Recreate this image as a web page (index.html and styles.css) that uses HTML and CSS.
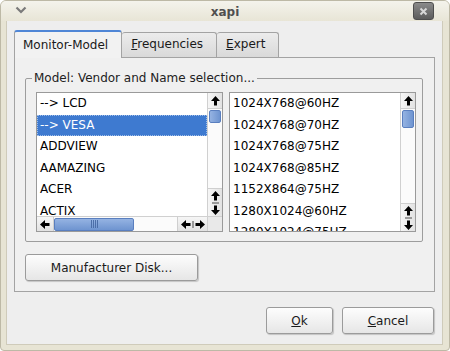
FILE: index.html
```html
<!DOCTYPE html>
<html lang="en">
<head>
  <meta charset="UTF-8">
  <title>xapi</title>
  <link rel="stylesheet" href="styles.css">
</head>
<body>

  <div class="window">
    <!-- Title bar -->
    <div class="titlebar">
      <svg class="menu-chevron" width="12" height="8" viewBox="0 0 12 8">
        <polyline points="1.5,1.5 6,6 10.5,1.5" fill="none" stroke="#7a7a7a" stroke-width="2.2"/>
      </svg>
      <span class="title">xapi</span>
      <div class="close-btn">
        <svg width="9" height="9" viewBox="0 0 9 9">
          <path d="M1.5 1.5 L7.5 7.5 M7.5 1.5 L1.5 7.5" stroke="#d8d8d8" stroke-width="2"/>
        </svg>
      </div>
    </div>

    <div class="client">
      <!-- Tabs -->
      <div class="tabbar">
        <div class="tab active">Monitor-Model</div>
        <div class="tab"><u>F</u>requencies</div>
        <div class="tab"><u>E</u>xpert</div>
      </div>

      <div class="pane">
        <fieldset class="group">
          <legend>Model: Vendor and Name selection...</legend>
          <div class="lists">

            <!-- Vendor list -->
            <div class="listbox">
              <div class="items">
                <div class="item">--&gt; LCD</div>
                <div class="item selected">--&gt; VESA</div>
                <div class="item">ADDVIEW</div>
                <div class="item">AAMAZING</div>
                <div class="item">ACER</div>
                <div class="item">ACTIX</div>
              </div>
              <div class="vscroll">
                <div class="sbtn up">
                  <svg width="9" height="10" viewBox="0 0 9 10"><path d="M4.5 0 L9 5 L6 5 L6 9.5 L3 9.5 L3 5 L0 5 Z"/></svg>
                </div>
                <div class="track">
                  <div class="thumb v" style="height: 13px; margin-top: 1px;"></div>
                </div>
                <div class="sbtn pair">
                  <svg width="9" height="10" viewBox="0 0 9 10"><path d="M4.5 0 L9 5 L6 5 L6 9.5 L3 9.5 L3 5 L0 5 Z"/></svg>
                  <span class="sep"></span>
                  <svg width="9" height="10" viewBox="0 0 9 10"><path d="M4.5 10 L9 5 L6 5 L6 0.5 L3 0.5 L3 5 L0 5 Z"/></svg>
                </div>
              </div>
              <div class="hscroll">
                <div class="sbtn left">
                  <svg width="10" height="9" viewBox="0 0 10 9"><path d="M0 4.5 L5 0 L5 3 L9.5 3 L9.5 6 L5 6 L5 9 Z"/></svg>
                </div>
                <div class="track">
                  <div class="thumb h" style="width: 80px;">
                    <span class="grip"></span>
                  </div>
                </div>
                <div class="sbtn hpair">
                  <svg width="10" height="9" viewBox="0 0 10 9"><path d="M0 4.5 L5 0 L5 3 L9.5 3 L9.5 6 L5 6 L5 9 Z"/></svg>
                  <span class="hsep"></span>
                  <svg width="10" height="9" viewBox="0 0 10 9"><path d="M10 4.5 L5 0 L5 3 L0.5 3 L0.5 6 L5 6 L5 9 Z"/></svg>
                </div>
              </div>
              <div class="corner"></div>
            </div>

            <!-- Resolution list -->
            <div class="listbox no-h">
              <div class="items">
                <div class="item">1024X768@60HZ</div>
                <div class="item">1024X768@70HZ</div>
                <div class="item">1024X768@75HZ</div>
                <div class="item">1024X768@85HZ</div>
                <div class="item">1152X864@75HZ</div>
                <div class="item">1280X1024@60HZ</div>
                <div class="item">1280X1024@75HZ</div>
              </div>
              <div class="vscroll">
                <div class="sbtn up">
                  <svg width="9" height="10" viewBox="0 0 9 10"><path d="M4.5 0 L9 5 L6 5 L6 9.5 L3 9.5 L3 5 L0 5 Z"/></svg>
                </div>
                <div class="track">
                  <div class="thumb v" style="height: 18px; margin-top: 1px;"></div>
                </div>
                <div class="sbtn pair">
                  <svg width="9" height="10" viewBox="0 0 9 10"><path d="M4.5 0 L9 5 L6 5 L6 9.5 L3 9.5 L3 5 L0 5 Z"/></svg>
                  <span class="sep"></span>
                  <svg width="9" height="10" viewBox="0 0 9 10"><path d="M4.5 10 L9 5 L6 5 L6 0.5 L3 0.5 L3 5 L0 5 Z"/></svg>
                </div>
              </div>
            </div>

          </div>
        </fieldset>

        <button type="button" class="btn disk">Manufacturer Disk...</button>
      </div>

      <div class="actions">
        <button type="button" class="btn ok"><u>O</u>k</button>
        <button type="button" class="btn cancel"><u>C</u>ancel</button>
      </div>
    </div>
  </div>

</body>
</html>
```

FILE: styles.css
```css
body {
  margin: 0;
  font-family: "DejaVu Sans", sans-serif;
  font-size: 12px;
  background: #ffffff;
}
.window {
  width: 450px;
  height: 351px;
  box-sizing: border-box;
  display: flex;
  flex-direction: column;
  background: #e7e4d4;
  border: 1px solid #bdb9a6;
  border-radius: 6px 6px 4px 4px;
  overflow: hidden;
}
.titlebar {
  height: 21px;
  position: relative;
  display: flex;
  align-items: center;
  justify-content: center;
  background: linear-gradient(#f4f3ec, #e8e5d6);
}
.title {
  font-weight: bold;
  color: #4f4f4f;
  padding-top: 1px;
}
.menu-chevron {
  position: absolute;
  left: 14px;
  top: 5px;
}
.close-btn {
  position: absolute;
  right: 15px;
  top: 1px;
  width: 21px;
  height: 18px;
  box-sizing: border-box;
  border: 1px solid #4e4e4e;
  border-radius: 3px;
  background: linear-gradient(#8a8a8a, #5c5c5c);
  display: flex;
  align-items: center;
  justify-content: center;
}
.client {
  flex: 1;
  margin: 0 6px 5px 5px;
  padding: 9px 7px 10px 7px;
  background: #eeeeee;
  border: 1px solid #cfcbba;
  border-top: none;
}
.tabbar {
  display: flex;
  align-items: flex-end;
  height: 27px;
}
.tab {
  height: 25px;
  box-sizing: border-box;
  line-height: 23px;
  padding: 0 13px 0 9px;
  border: 1px solid #a3a3a3;
  border-bottom: none;
  border-left: none;
  border-radius: 3px 3px 0 0;
  background: linear-gradient(#ececec, #d9d9d9);
  color: #1a1a1a;
}
.tab.active {
  height: 28px;
  line-height: 26px;
  padding-left: 8px;
  border-left: 1px solid #a3a3a3;
  border-top: 2px solid #4f86d6;
  background: #f2f2f2;
  margin-bottom: -1px;
  position: relative;
}
.pane {
  height: 235px;
  box-sizing: border-box;
  border: 1px solid #a3a3a3;
  background: #f0f0f0;
  padding: 13px 11px 10px 10px;
}
.group {
  margin: 0;
  padding: 7px 8px 9px 10px;
  border: 1px solid #9d9d9d;
  border-radius: 2px;
  min-width: 0;
}
.group legend {
  padding: 0 2px;
  margin-left: -4px;
  line-height: 14px;
  color: #222;
}
.lists {
  display: grid;
  grid-template-columns: 187px 187px;
  gap: 6px;
}
.listbox {
  height: 140px;
  box-sizing: border-box;
  display: grid;
  grid-template-columns: 1fr 15px;
  grid-template-rows: 1fr 15px;
  border: 1px solid #9a9a9a;
  background: #ffffff;
  overflow: hidden;
}
.listbox.no-h {
  grid-template-rows: 1fr;
}
.items {
  overflow: hidden;
  color: #000;
}
.item {
  height: 21.5px;
  line-height: 21.5px;
  padding-left: 3px;
  white-space: nowrap;
}
.item.selected {
  background: #3e7ad0;
  color: #ffffff;
  outline: 1px dotted #9fbde8;
  outline-offset: -1px;
}
.vscroll {
  display: flex;
  flex-direction: column;
  border-left: 1px solid #d0d0d0;
  background: #fafafa;
}
.sbtn {
  display: flex;
  align-items: center;
  justify-content: center;
  background: linear-gradient(90deg, #f6f6f6, #e2e2e2);
}
.sbtn svg path {
  fill: #000;
}
.vscroll .sbtn.up {
  height: 15px;
  border-bottom: 1px solid #cfcfcf;
}
.vscroll .sbtn.pair {
  height: 27px;
  flex-direction: column;
  gap: 1px;
  border-top: 1px solid #cfcfcf;
}
.sep {
  width: 7px;
  height: 2px;
  background: #9a9a9a;
}
.track {
  flex: 1;
  display: flex;
  flex-direction: column;
  align-items: center;
  background: #fbfbfb;
}
.thumb {
  box-sizing: border-box;
  border: 1px solid #5a7fbf;
  border-radius: 2px;
  background: linear-gradient(90deg, #95b3e2, #6e94d0);
}
.thumb.v {
  width: 12px;
}
.hscroll {
  display: flex;
  border-top: 1px solid #d0d0d0;
  background: #fafafa;
}
.hscroll .track {
  flex-direction: row;
  align-items: center;
}
.hscroll .thumb.h {
  height: 13px;
  background: linear-gradient(#95b3e2, #6e94d0);
  display: flex;
  justify-content: center;
  align-items: center;
}
.grip {
  width: 7px;
  height: 8px;
  background: repeating-linear-gradient(90deg, #4c6ea8 0 1px, transparent 1px 2px);
}
.hscroll .sbtn {
  background: linear-gradient(#f6f6f6, #e2e2e2);
}
.hscroll .sbtn.left {
  width: 16px;
  border-right: 1px solid #cfcfcf;
}
.hscroll .sbtn.hpair {
  width: 29px;
  gap: 1px;
  border-left: 1px solid #cfcfcf;
}
.hsep {
  width: 2px;
  height: 7px;
  background: #9a9a9a;
}
.corner {
  background: #e9e9e9;
  border-left: 1px solid #d0d0d0;
  border-top: 1px solid #d0d0d0;
}
.btn {
  font-family: "DejaVu Sans", sans-serif;
  font-size: 12px;
  color: #1a1a1a;
  height: 27px;
  padding: 0;
  border: 1px solid #9b9b9b;
  border-radius: 3px;
  background: linear-gradient(#fdfdfd, #e6e6e6);
  box-shadow: 1px 1px 1px rgba(0, 0, 0, 0.18);
}
.btn.disk {
  width: 173px;
  margin-top: 12px;
}
.actions {
  display: flex;
  justify-content: flex-end;
  gap: 9px;
  margin-top: 15px;
  padding-right: 1px;
}
.btn.ok {
  width: 67px;
}
.btn.cancel {
  width: 92px;
}
```
